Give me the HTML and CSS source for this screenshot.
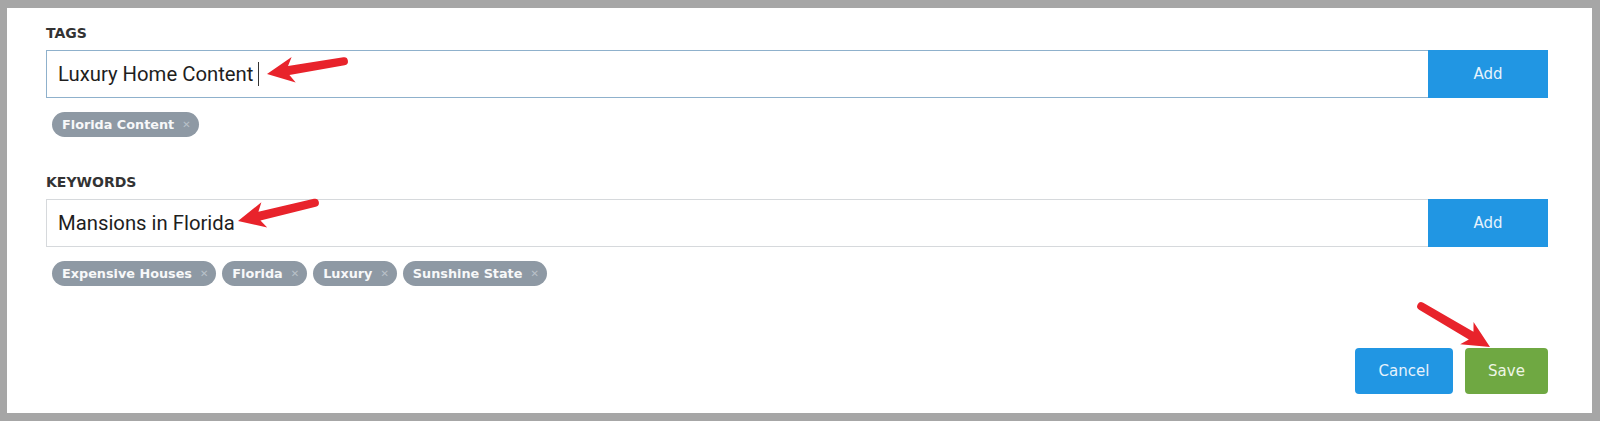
FILE: index.html
```html
<!DOCTYPE html>
<html lang="en">
<head>
    <meta charset="UTF-8">
    <meta name="viewport" content="width=device-width, initial-scale=1.0">
    <title>Tags and Keywords</title>
    <link rel="stylesheet" href="styles.css">
</head>
<body>
    <div class="panel">
        <div class="field">
            <div class="field-label">TAGS</div>
            <div class="input-row">
                <div class="text-input is-focused">Luxury Home Content<span class="caret"></span></div>
                <button class="add-btn">Add</button>
            </div>
            <div class="tag-list">
                <span class="tag">Florida Content <span class="tag-x">&#x2715;</span></span>
            </div>
        </div>

        <div class="field field-keywords">
            <div class="field-label">KEYWORDS</div>
            <div class="input-row">
                <div class="text-input">Mansions in Florida</div>
                <button class="add-btn">Add</button>
            </div>
            <div class="tag-list">
                <span class="tag">Expensive Houses <span class="tag-x">&#x2715;</span></span>
                <span class="tag">Florida <span class="tag-x">&#x2715;</span></span>
                <span class="tag">Luxury <span class="tag-x">&#x2715;</span></span>
                <span class="tag">Sunshine State <span class="tag-x">&#x2715;</span></span>
            </div>
        </div>

        <div class="actions">
            <button class="btn btn-cancel">Cancel</button>
            <button class="btn btn-save">Save</button>
        </div>
    </div>

    <!-- red annotation arrows drawn over the form -->
    <svg class="annotations" width="1600" height="421" viewBox="0 0 1600 421">
        <path transform="translate(267 74) rotate(171)" d="M0 0 L-27 -13 L-22 -4.5 L-78 -3.5 A4 4 0 0 0 -78 4.5 L-22 4.5 L-27 13 Z" />
        <path transform="translate(238 221) rotate(167)" d="M0 0 L-27 -13 L-22 -4.5 L-79 -3.5 A4 4 0 0 0 -79 4.5 L-22 4.5 L-27 13 Z" />
        <path transform="translate(1490 347) rotate(31)" d="M0 0 L-27 -13 L-22 -4.5 L-80 -3.5 A4 4 0 0 0 -80 4.5 L-22 4.5 L-27 13 Z" />
    </svg>
</body>
</html>
```

FILE: styles.css
```css
html, body {
    height: 100%;
}

body {
    margin: 0;
    padding: 8px 8px 8px 7px;
    box-sizing: border-box;
    background-color: #a6a6a6;
    font-family: 'DejaVu Sans', sans-serif;
    color: #333333;
    position: relative;
}

.panel {
    height: 100%;
    box-sizing: border-box;
    background-color: #ffffff;
    padding: 17px 44px 19px 39px;
    display: flex;
    flex-direction: column;
}

.field-label {
    font-size: 14px;
    font-weight: bold;
    line-height: 17px;
    color: #333333;
    margin-bottom: 8px;
}

.field-keywords {
    margin-top: 37px;
}

.input-row {
    display: flex;
    height: 48px;
}

.text-input {
    flex: 1;
    display: flex;
    align-items: center;
    box-sizing: border-box;
    border: 1px solid #d6d9dc;
    border-right: none;
    padding: 0 11px;
    font-family: 'Roboto', sans-serif;
    font-size: 20.3px;
    color: #1e1e1e;
}

.text-input.is-focused {
    border-color: #8fb1cc;
}

.caret {
    display: inline-block;
    width: 1px;
    height: 24px;
    margin-left: 5px;
    background-color: #333333;
}

.add-btn {
    width: 120px;
    border: none;
    background-color: #2196e3;
    color: #e6f2fc;
    font-family: 'DejaVu Sans', sans-serif;
    font-size: 15px;
    cursor: pointer;
}

.tag-list {
    display: flex;
    gap: 6px;
    margin-top: 14px;
    padding-left: 6px;
}

.tag {
    display: inline-flex;
    align-items: center;
    height: 25px;
    padding: 0 8px 0 10px;
    border-radius: 13px;
    background-color: #8e99a4;
    color: #f7f8f9;
    font-size: 12.8px;
    font-weight: bold;
}

.tag-x {
    margin-left: 8px;
    font-size: 10px;
    font-weight: bold;
    color: #b9c1c9;
}

.actions {
    margin-top: auto;
    display: flex;
    justify-content: flex-end;
    gap: 12px;
}

.btn {
    height: 46px;
    border: none;
    border-radius: 4px;
    color: #e6f2fc;
    font-family: 'DejaVu Sans', sans-serif;
    font-size: 15px;
    cursor: pointer;
}

.btn-cancel {
    width: 98px;
    background-color: #2196e3;
}

.btn-save {
    width: 83px;
    background-color: #6fa842;
    color: #eef6e6;
}

.annotations {
    position: absolute;
    left: 0;
    top: 0;
    pointer-events: none;
}

.annotations path {
    fill: #e8232b;
}
```
